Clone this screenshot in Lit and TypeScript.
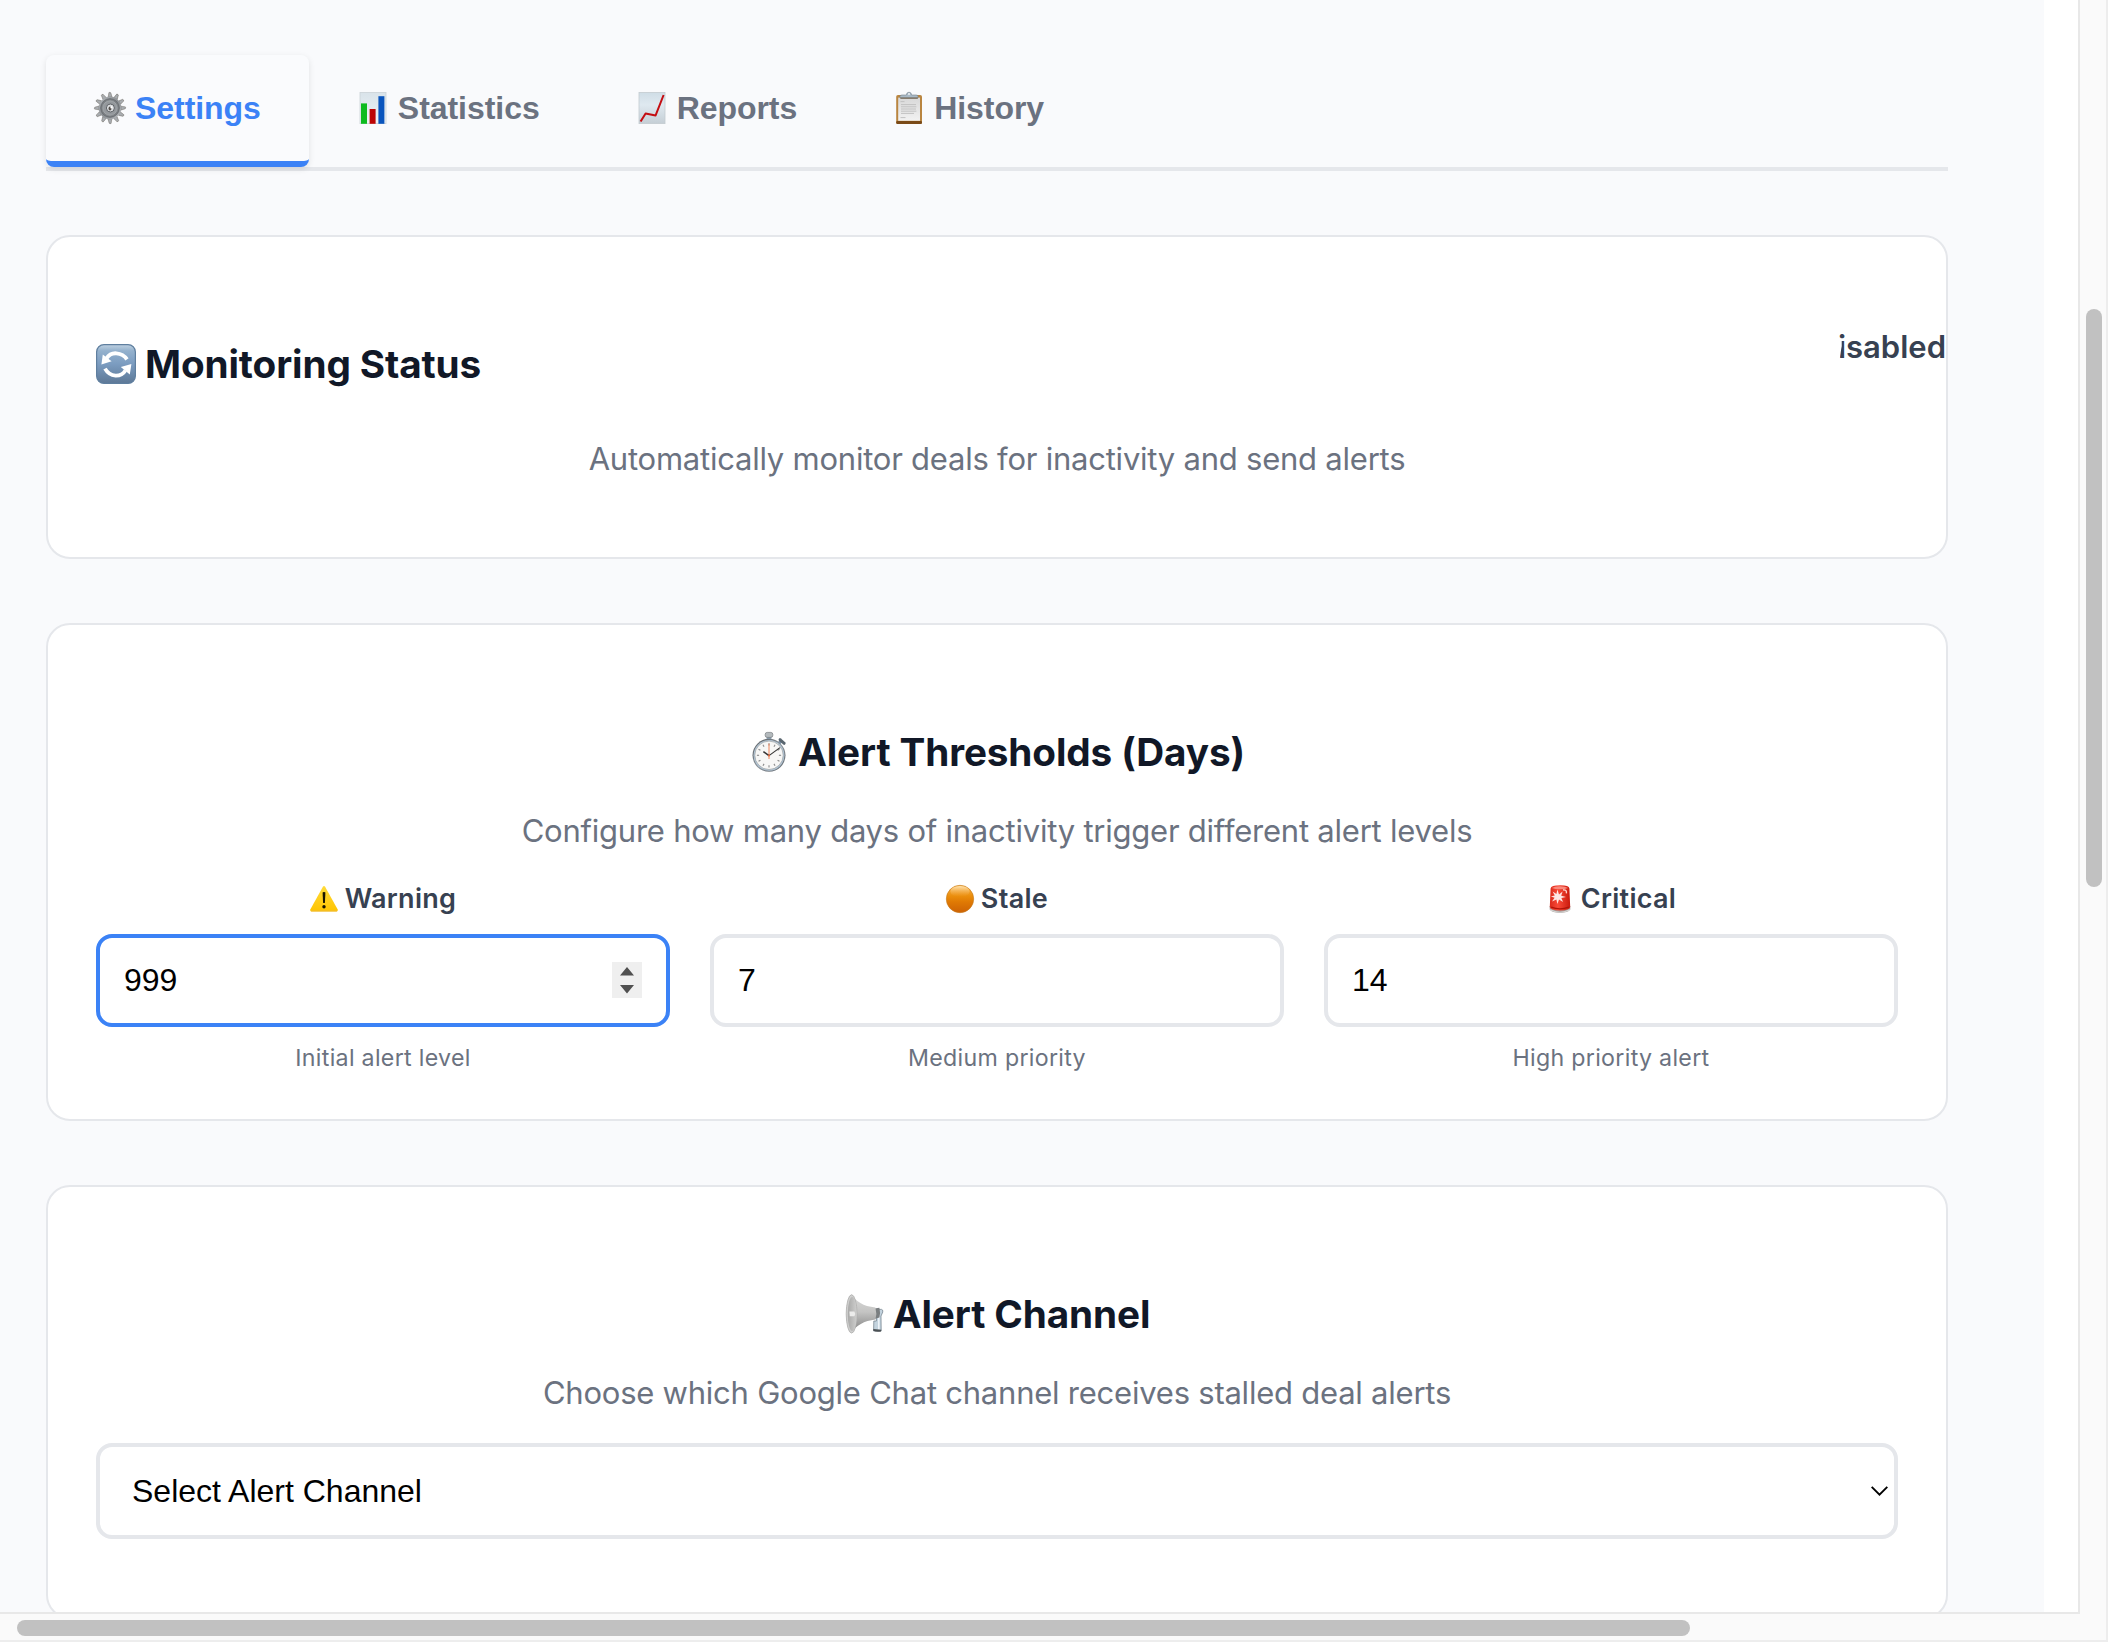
import { LitElement, html, css, svg } from "lit";
import { customElement, property } from "lit/decorators.js";

const teeth = Array.from({ length: 12 }, (_, i) => i * 30);

const ICONS: Record<string, unknown> = {
  gear: svg`
    <defs>
      <linearGradient id="g1" x1="0" y1="0" x2="1" y2="1"><stop offset="0" stop-color="#b4b8bc"/><stop offset=".5" stop-color="#8b8f93"/><stop offset="1" stop-color="#bcbfc2"/></linearGradient>
    </defs>
    ${teeth.map((a) => svg`<path d="M14.2 5 L14.9 .6 Q16 -.1 16.8 .8 L18 5Z" fill="#a9adb1" stroke="#6c6862" stroke-width=".5" transform="rotate(${a} 16 16)"/>`)}
    <circle cx="16" cy="16" r="11.4" fill="url(#g1)"/>
    <circle cx="16" cy="16" r="9.3" fill="#7c8084" stroke="#63676b" stroke-width=".8"/>
    <circle cx="16" cy="16" r="7.2" fill="#94989c" stroke="#a9adb0" stroke-width=".7"/>
    <circle cx="16.4" cy="16" r="4" fill="#dddfe1" stroke="#5d6165" stroke-width="1"/>
    <ellipse cx="16" cy="16.6" rx="1.5" ry="2" fill="#55504c"/>
    <circle cx="17.4" cy="15.4" r="1.1" fill="#fff"/>`,
  bars: svg`
    <defs><linearGradient id="b1" x1="0" y1="0" x2="0" y2="1"><stop offset="0" stop-color="#d9e3ea"/><stop offset="1" stop-color="#eef3f6"/></linearGradient></defs>
    <rect x="3" y=".4" width="26" height="31.2" fill="url(#b1)" stroke="#cbd3d8" stroke-width=".8"/>
    <rect x="4" y="11.4" width="6" height="20.4" fill="#0dbb1f"/>
    <rect x="12.6" y="17" width="6" height="14.8" fill="#bd0505"/>
    <rect x="21.4" y="4.2" width="6" height="27.6" fill="#0a55bd"/>`,
  chart: svg`
    <defs><linearGradient id="c1" x1="0" y1="0" x2="0" y2="1"><stop offset="0" stop-color="#cfdde6"/><stop offset=".4" stop-color="#dfe9f0"/><stop offset="1" stop-color="#c5ced5"/></linearGradient></defs>
    <rect x="3" y=".4" width="26" height="31.2" fill="url(#c1)" stroke="#c3cbd0" stroke-width=".8"/>
    <path d="M4.6 29.6 L9.6 21.4 L19.6 23.4 L27.6 3" fill="none" stroke="#c40d12" stroke-width="2" stroke-linejoin="round"/>`,
  clipboard: svg`
    <defs><linearGradient id="p1" x1="0" y1="0" x2="0" y2="1"><stop offset="0" stop-color="#d8d8d8"/><stop offset="1" stop-color="#f2f2f2"/></linearGradient></defs>
    <rect x="3.2" y="3" width="25.8" height="29" rx="1.8" fill="#b98540"/>
    <rect x="3.2" y="29" width="25.8" height="3" rx="1.2" fill="#7a4a17"/>
    <rect x="5.2" y="5.6" width="21.8" height="23.2" fill="url(#p1)"/>
    <path d="M7.5 9.6h4M8 12.6h15M8 14.8h15.4M8 17h15M8 19.2h15.4M8 21.4h13M7.5 25.6h5" stroke="#c2c2c2" stroke-width="1"/>
    <path d="M7 5.8 V4.4 Q7 3 9 3 H13.4 Q13.6 .2 16 .2 T18.6 3 H23 Q25 3 25 4.4 V5.8Z" fill="#a9b9c6" stroke="#72808c" stroke-width=".6"/>
    <circle cx="16" cy="2" r=".9" fill="#f5f8fa"/>
    <path d="M7.4 6.2 H24.8" stroke="#6c5a45" stroke-width="1"/>`,
  refresh: svg`
    <defs><linearGradient id="r1" x1="0" y1="0" x2="0" y2="1"><stop offset="0" stop-color="#c0d2e2"/><stop offset=".16" stop-color="#94b1cd"/><stop offset=".5" stop-color="#7b9cc0"/><stop offset="1" stop-color="#5d7896"/></linearGradient></defs>
    <rect x=".6" y=".6" width="38.8" height="38.8" rx="7.4" fill="url(#r1)" stroke="#5f7f9f" stroke-width="1.2"/>
    <path d="M10.4 14.6 Q14 8.8 20.4 9.3 Q27.4 9.8 31 15.4" fill="none" stroke="#fff" stroke-width="3.8"/>
    <path d="M6.8 10.6 L5.4 20.4 L15.6 17.2Z" fill="#fff"/>
    <path d="M29.4 26.4 Q26 31.8 19.6 31.6 Q12.6 31 9 24.6" fill="none" stroke="#fff" stroke-width="3.8"/>
    <path d="M35.4 20 L24.8 23 L33.8 30.4Z" fill="#fff"/>`,
  stopwatch: svg`
    <defs><linearGradient id="w1" x1="0" y1="0" x2="1" y2="1"><stop offset="0" stop-color="#55595d"/><stop offset=".5" stop-color="#8c9399"/><stop offset="1" stop-color="#5f666c"/></linearGradient></defs>
    <rect x="17.6" y="4" width="4.8" height="5" fill="#8aa0b3"/>
    <rect x="16.2" y=".4" width="7.6" height="5" rx="2" fill="#b4babd" stroke="#74797d" stroke-width=".7"/>
    <path d="M29.6 11.6 L32.6 8.6" stroke="#7590aa" stroke-width="3"/>
    <path d="M31 7.6 L35.2 11.4" stroke="#5a6670" stroke-width="2.8" stroke-linecap="round"/>
    <circle cx="20" cy="23.3" r="16.5" fill="url(#w1)"/>
    <circle cx="20" cy="23.3" r="15.4" fill="#b3c7d8"/>
    <circle cx="20" cy="23.3" r="14.2" fill="#f7f7f6" stroke="#8e9396" stroke-width=".6"/>
    ${teeth.map((a) => svg`<path d="M20 11.2V13.4" stroke="#8a8a8a" stroke-width="1.1" transform="rotate(${a} 20 23.3)"/>`)}
    <path d="M20 27 V11.6" stroke="#f0875c" stroke-width="1"/>
    <path d="M20 23.6 L14.4 19.6" stroke="#333" stroke-width="1.5"/>
    <path d="M20 23.6 L31 15.6" stroke="#333" stroke-width="1.1"/>
    <circle cx="20" cy="23.4" r="1" fill="#e8683a"/>`,
  warning: svg`
    <defs><linearGradient id="y1" x1="0" y1="0" x2="0" y2="1"><stop offset="0" stop-color="#ffdb3a"/><stop offset="1" stop-color="#ffc400"/></linearGradient></defs>
    <path d="M12.9 1.7 Q14 .3 15.1 1.7 L27.7 24.6 Q28.2 26.4 26.6 26.4 H1.4 Q-.2 26.4 .3 24.6Z" fill="url(#y1)"/>
    <path d="M.8 26 H27.2" stroke="#e8b64a" stroke-width=".8"/>
    <path d="M12.6 7.8 Q12.6 7 14 7 T15.4 7.8 L14.9 18 H13.1Z" fill="#1a1500"/>
    <circle cx="14" cy="21.8" r="1.7" fill="#1a1500"/>`,
  circle: svg`
    <defs><linearGradient id="o1" x1="0" y1="0" x2="0" y2="1"><stop offset="0" stop-color="#f7b44c"/><stop offset=".4" stop-color="#ea8d0c"/><stop offset=".6" stop-color="#e07a04"/><stop offset="1" stop-color="#cd6204"/></linearGradient>
    <linearGradient id="o2" x1="0" y1="0" x2="0" y2="1"><stop offset="0" stop-color="#ffe3ae"/><stop offset="1" stop-color="#f2a033" stop-opacity="0"/></linearGradient></defs>
    <circle cx="14" cy="14" r="13.7" fill="url(#o1)" stroke="#c47a1c" stroke-width=".6"/>
    <ellipse cx="14" cy="6.4" rx="9.6" ry="5.4" fill="url(#o2)"/>`,
  siren: svg`
    <defs><linearGradient id="s1" x1="0" y1="0" x2="1" y2="0"><stop offset="0" stop-color="#d92a1c"/><stop offset=".4" stop-color="#f94a38"/><stop offset="1" stop-color="#c9190c"/></linearGradient></defs>
    <path d="M3.6 21 H24.4 L24.2 24.6 Q22 27.9 14 27.9 T3.8 24.6Z" fill="#a29d9a"/>
    <path d="M4 24 Q14 29.4 24 24 L23.4 25.8 Q14 29.6 4.6 25.8Z" fill="#d7d5d3"/>
    <path d="M3.8 22 L4.6 3.4 Q5 .4 14 .3 T23.4 3.4 L24.2 22 Q23.4 25.4 14 25.4 T3.8 22Z" fill="url(#s1)"/>
    <path d="M5.8 3 Q9 1.2 14 1.2 T22.2 3 Q19 4.2 14 4.2 T5.8 3Z" fill="#f9897c"/>
    <path d="M17 5 Q21 4.4 20.4 8.4" stroke="#ffd3cc" stroke-width="1.4" fill="none"/>
    <path d="M11.4 4.6 L13 9.4 L16.6 6.6 L15.2 10.8 L20 12 L15.4 13 L17 17 L13 14.6 L11.4 19 L10.4 14.4 L6 16.6 L8.6 12.8 L4.8 11.6 L8.8 10.6 L6.6 6.6 L10.4 9Z" fill="#fff" opacity=".88"/>
    <path d="M5.2 22.2 Q14 25.6 22.8 22.2" stroke="#b01408" stroke-width="1.4" fill="none"/>`,
  speaker: svg`
    <defs><linearGradient id="m1" x1="0" y1="0" x2="0" y2="1"><stop offset="0" stop-color="#d9d9d8"/><stop offset=".45" stop-color="#c4c4c3"/><stop offset="1" stop-color="#7e7e7e"/></linearGradient>
    <linearGradient id="m2" x1="0" y1="0" x2="1" y2="0"><stop offset="0" stop-color="#a9a9a8"/><stop offset="1" stop-color="#cdcdcc"/></linearGradient></defs>
    <path d="M31.4 15.4 H37.6 Q39 15.4 38.8 18 L37 22 L37.2 37 H29.6 L29.8 27 H32.4 V20 H31Z" fill="#c3d3de" stroke="#6c7a85" stroke-width=".7"/>
    <path d="M34.8 19V35.6" stroke="#f2f7fb" stroke-width="1.4"/>
    <path d="M29.2 36.4 Q32 38.6 37 37.4 L37.2 35.8 L29.4 35Z" fill="#4b5054"/>
    <path d="M30.4 14.4 L35.4 13.8 Q36.6 18.6 35.4 23.4 L30.4 25Z" fill="#7a7e80"/>
    <path d="M7.4 .8 C12 7.4 19 12.2 31.4 13.6 Q33.2 19.6 31.4 25.6 C20 27 12 31.4 7.4 39Z" fill="url(#m1)"/>
    <ellipse cx="7.6" cy="19.9" rx="5.4" ry="19.2" fill="#cfcfce" stroke="#adadac" stroke-width=".8"/>
    <ellipse cx="8.2" cy="20" rx="4.4" ry="17" fill="url(#m2)"/>
    <path d="M5.4 17.6 H10.4 Q12 20 10.4 22.2 H5.8Z" fill="#ececeb"/>`,
};

const SIZES: Record<string, number> = {
  gear: 32, bars: 32, chart: 32, clipboard: 32,
  refresh: 40, stopwatch: 40, speaker: 40,
  warning: 28, circle: 28, siren: 28,
};

@customElement("emoji-icon")
class EmojiIcon extends LitElement {
  @property() name = "gear";
  static styles = css`
    :host { display: block; flex: none; }
    svg { display: block; overflow: visible; }
  `;
  render() {
    const s = SIZES[this.name];
    return html`<svg width=${s} height=${s} viewBox="0 0 ${s} ${s}">${ICONS[this.name]}</svg>`;
  }
}

const TABS = [
  { icon: "gear", label: "Settings", active: true },
  { icon: "bars", label: "Statistics" },
  { icon: "chart", label: "Reports" },
  { icon: "clipboard", label: "History" },
];

const LEVELS = [
  { icon: "warning", label: "Warning", value: "999", hint: "Initial alert level", focused: true },
  { icon: "circle", label: "Stale", value: "7", hint: "Medium priority" },
  { icon: "siren", label: "Critical", value: "14", hint: "High priority alert" },
];

@customElement("app-root")
class AppRoot extends LitElement {
  static styles = css`
    :host { display: block; }
    * { box-sizing: border-box; }
    .window {
      display: grid;
      grid-template-columns: 2078px 30px;
      grid-template-rows: 1612px 30px;
      width: 2124px; height: 1642px;
      background: #fff; overflow: hidden;
      font-family: Inter, "Liberation Sans", sans-serif;
    }
    .view { overflow: hidden; }
    .page {
      width: 2044px; height: 1612px;
      padding: 55px 96px 0 46px;
      background: #f9fafc;
      display: flex; flex-direction: column; gap: 64px;
    }
    .tabs { display: flex; flex: none; height: 116px; border-bottom: 4px solid #e5e7eb; }
    .tab {
      display: flex; align-items: center; gap: 9px; height: 112px;
      padding: 0 48px; border-bottom: 6px solid transparent; border-radius: 8px;
      font: 700 32px/40px "Liberation Sans", Arial, sans-serif; letter-spacing: -0.05px; color: #6b7280;
    }
    .tab.active {
      color: #3b82f6; border-bottom-color: #3b82f6; background: #fafbfd;
      box-shadow: 0 2px 6px rgba(0, 0, 0, 0.1);
    }
    .card {
      flex: none; background: #fff; border: 2px solid #e5e7eb; border-radius: 24px;
      padding: 48px;
    }
    .status { height: 324px; }
    .thresholds { height: 498px; }
    .channel { height: 434px; }
    .row { display: flex; justify-content: space-between; align-items: flex-start; }
    .title {
      display: flex; align-items: center; justify-content: center; gap: 9px;
      height: 48px; margin: 55px 0 0;
      font-size: 38.7px; line-height: 48px; font-weight: 700; letter-spacing: -0.12px; color: #111827;
    }
    .desc {
      margin: 31px 0 0; text-align: center;
      font-size: 31px; line-height: 48px; letter-spacing: -0.23px; color: #6b7280;
    }
    .status .desc { margin-top: 47px; }
    .state {
      margin: 42px -48px 0 0; font-size: 31px; line-height: 40px; font-weight: 600; color: #374151;
      clip-path: polygon(1.2px 0, 1.2px 13px, 3.8px 13.5px, 3.8px 19px, 1.8px 31px, 1.8px 40px, 100% 40px, 100% 0);
    }
    .levels { display: grid; grid-template-columns: repeat(3, 1fr); gap: 40px; margin-top: 28px; }
    .label {
      display: flex; align-items: center; justify-content: center; gap: 7px;
      height: 32px; font-size: 27px; line-height: 32px; letter-spacing: 0.3px; font-weight: 600; color: #374151;
    }
    .input {
      display: flex; align-items: center; justify-content: space-between;
      margin-top: 19px; height: 93px; padding: 0 24px 1px;
      border: 4px solid #e5e7eb; border-radius: 16px; background: #fff;
      font: 32px/40px "Liberation Sans", Arial, sans-serif; color: #000;
    }
    .input.focused { border-color: #3b82f6; }
    .spinner { display: block; background: #efefef; }
    .hint { margin-top: 15px; text-align: center; font-size: 23.2px; line-height: 32px; letter-spacing: 0.3px; color: #6b7280; }
    .select {
      display: flex; align-items: center; justify-content: space-between;
      margin-top: 26px; height: 96px; padding: 0 6px 0 32px;
      border: 4px solid #e5e7eb; border-radius: 16px; background: #fff;
      font: 32px/40px "Liberation Sans", Arial, sans-serif; color: #000;
    }
    .vbar {
      grid-column: 2; grid-row: 1; background: #fafafa;
      border-left: 2px solid #e8e8e8; border-right: 2px solid #ededed;
      padding: 309px 4px 0 6px;
    }
    .vthumb { height: 578px; width: 16px; border-radius: 8px; background: #c1c1c1; }
    .hbar {
      grid-column: 1; grid-row: 2; background: #fafafa;
      border-top: 2px solid #e8e8e8; border-bottom: 2px solid #ededed;
      padding: 6px 0 0 17px;
    }
    .hthumb { height: 16px; width: 1673px; border-radius: 8px; background: #c1c1c1; }
    .corner { grid-column: 2; grid-row: 2; background: #fafafa; border-right: 2px solid #ededed; border-bottom: 2px solid #ededed; }
    .corner::before { content: ""; display: block; width: 2px; height: 2px; background: #e8e8e8; }
  `;

  render() {
    return html`
      <div class="window">
        <div class="view">
          <main class="page">
            <nav class="tabs">
              ${TABS.map((t) => html`<div class="tab ${t.active ? "active" : ""}"><emoji-icon name=${t.icon}></emoji-icon><span>${t.label}</span></div>`)}
            </nav>
            <section class="card status">
              <div class="row">
                <h3 class="title"><emoji-icon name="refresh"></emoji-icon><span>Monitoring Status</span></h3>
                <span class="state">isabled</span>
              </div>
              <p class="desc">Automatically monitor deals for inactivity and send alerts</p>
            </section>
            <section class="card thresholds">
              <h3 class="title"><emoji-icon name="stopwatch"></emoji-icon><span>Alert Thresholds (Days)</span></h3>
              <p class="desc">Configure how many days of inactivity trigger different alert levels</p>
              <div class="levels">
                ${LEVELS.map((l) => html`
                  <div>
                    <div class="label"><emoji-icon name=${l.icon}></emoji-icon><span>${l.label}</span></div>
                    <div class="input ${l.focused ? "focused" : ""}"><span>${l.value}</span>
                      ${l.focused ? html`<svg class="spinner" width="30" height="36" viewBox="0 0 30 36"><path d="M8 13.4L15 5l7 8.4zM8 23l7 8.4L22 23z" fill="#505050"/></svg>` : ""}
                    </div>
                    <div class="hint">${l.hint}</div>
                  </div>`)}
              </div>
            </section>
            <section class="card channel">
              <h3 class="title"><emoji-icon name="speaker"></emoji-icon><span>Alert Channel</span></h3>
              <p class="desc">Choose which Google Chat channel receives stalled deal alerts</p>
              <div class="select"><span>Select Alert Channel</span>
                <svg width="17" height="10" viewBox="0 0 17 10"><path d="M.7 .8L8.5 8.6L16.3 .8" fill="none" stroke="#000" stroke-width="1.9"/></svg>
              </div>
            </section>
          </main>
        </div>
        <div class="vbar"><div class="vthumb"></div></div>
        <div class="hbar"><div class="hthumb"></div></div>
        <div class="corner"></div>
      </div>
    `;
  }
}
